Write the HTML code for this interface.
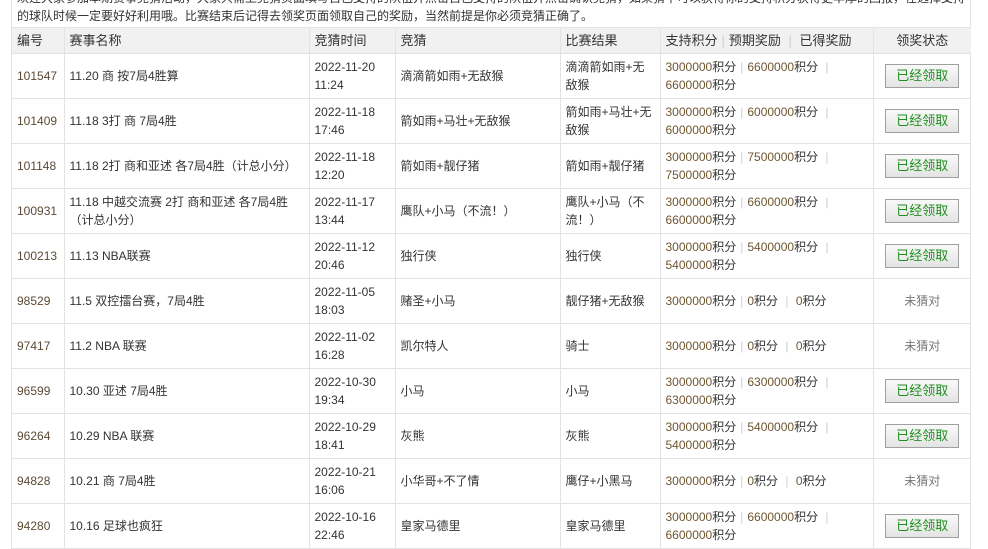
<!DOCTYPE html>
<html><head><meta charset="utf-8"><style>
*{margin:0;padding:0;box-sizing:border-box}
body{width:988px;height:548px;overflow:hidden;background:#fff;font-family:"Liberation Sans","Noto Sans CJK SC",sans-serif;font-size:12px;color:#333}
.wrap{position:absolute;left:11px;top:-12px;width:960px;border-left:1px solid #e3e3e3;border-right:1px solid #e3e3e3}
.intro{padding:1px 5px 0 5px;line-height:18px;height:39px;overflow:hidden;color:#333;font-size:12px}
table{border-collapse:collapse;table-layout:fixed;width:959px}
td,th{border:1px solid #e3e3e3;padding:0 5px;font-weight:normal;text-align:left;line-height:18px;vertical-align:middle}
th{background:#f1f1f1;height:26px;font-size:13px}
td{height:45px}
tr td:first-child,tr th:first-child{border-left:none}
tr td:last-child,tr th:last-child{border-right:none;text-align:center}
.n{color:#5c4a35}
.p{color:#6e5530}
.s{color:#ccc;margin:0 4px}
.b{display:inline-block;width:74px;height:24px;line-height:22px;border:1px solid #a0a0a0;background:linear-gradient(#fafafa,#e4e4e4);color:#1e8e1e;font-size:13px;text-align:center}
.w{color:#777}
</style></head><body><div class="wrap">
<div class="intro">欢迎大家参加本期赛事竞猜活动，大家只需上竞猜页面填写自己支持的队伍并点击自己支持的队伍并点击确认竞猜，如果猜中可以获得你的支持积分获得更丰厚的回报，在选择支持的球队时候一定要好好利用哦。比赛结束后记得去领奖页面领取自己的奖励，当然前提是你必须竞猜正确了。</div>
<table>
<colgroup><col style="width:52px"><col style="width:245px"><col style="width:86px"><col style="width:165px"><col style="width:100px"><col style="width:213px"><col style="width:98px"></colgroup>
<tr><th>编号</th><th>赛事名称</th><th>竞猜时间</th><th>竞猜</th><th>比赛结果</th><th>支持积分<span class="s">|</span>预期奖励 <span class="s">|</span> 已得奖励</th><th>领奖状态</th></tr>
<tr><td class="n">101547</td><td>11.20 商 按7局4胜算</td><td>2022-11-20<br>11:24</td><td>滴滴箭如雨+无敌猴</td><td>滴滴箭如雨+无敌猴</td><td><span class="p">3000000</span>积分<span class="s">|</span><span class="p">6600000</span>积分 <span class="s">|</span><br><span class="p">6600000</span>积分</td><td><span class="b">已经领取</span></td></tr>
<tr><td class="n">101409</td><td>11.18 3打 商 7局4胜</td><td>2022-11-18<br>17:46</td><td>箭如雨+马壮+无敌猴</td><td>箭如雨+马壮+无敌猴</td><td><span class="p">3000000</span>积分<span class="s">|</span><span class="p">6000000</span>积分 <span class="s">|</span><br><span class="p">6000000</span>积分</td><td><span class="b">已经领取</span></td></tr>
<tr><td class="n">101148</td><td>11.18 2打 商和亚述 各7局4胜（计总小分）</td><td>2022-11-18<br>12:20</td><td>箭如雨+靓仔猪</td><td>箭如雨+靓仔猪</td><td><span class="p">3000000</span>积分<span class="s">|</span><span class="p">7500000</span>积分 <span class="s">|</span><br><span class="p">7500000</span>积分</td><td><span class="b">已经领取</span></td></tr>
<tr><td class="n">100931</td><td>11.18 中越交流赛 2打 商和亚述 各7局4胜（计总小分）</td><td>2022-11-17<br>13:44</td><td>鹰队+小马（不流！）</td><td>鹰队+小马（不流！）</td><td><span class="p">3000000</span>积分<span class="s">|</span><span class="p">6600000</span>积分 <span class="s">|</span><br><span class="p">6600000</span>积分</td><td><span class="b">已经领取</span></td></tr>
<tr><td class="n">100213</td><td>11.13 NBA联赛</td><td>2022-11-12<br>20:46</td><td>独行侠</td><td>独行侠</td><td><span class="p">3000000</span>积分<span class="s">|</span><span class="p">5400000</span>积分 <span class="s">|</span><br><span class="p">5400000</span>积分</td><td><span class="b">已经领取</span></td></tr>
<tr><td class="n">98529</td><td>11.5 双控擂台赛，7局4胜</td><td>2022-11-05<br>18:03</td><td>赌圣+小马</td><td>靓仔猪+无敌猴</td><td><span class="p">3000000</span>积分<span class="s">|</span><span class="p">0</span>积分 <span class="s">|</span> <span class="p">0</span>积分</td><td class="w">未猜对</td></tr>
<tr><td class="n">97417</td><td>11.2 NBA 联赛</td><td>2022-11-02<br>16:28</td><td>凯尔特人</td><td>骑士</td><td><span class="p">3000000</span>积分<span class="s">|</span><span class="p">0</span>积分 <span class="s">|</span> <span class="p">0</span>积分</td><td class="w">未猜对</td></tr>
<tr><td class="n">96599</td><td>10.30 亚述 7局4胜</td><td>2022-10-30<br>19:34</td><td>小马</td><td>小马</td><td><span class="p">3000000</span>积分<span class="s">|</span><span class="p">6300000</span>积分 <span class="s">|</span><br><span class="p">6300000</span>积分</td><td><span class="b">已经领取</span></td></tr>
<tr><td class="n">96264</td><td>10.29 NBA 联赛</td><td>2022-10-29<br>18:41</td><td>灰熊</td><td>灰熊</td><td><span class="p">3000000</span>积分<span class="s">|</span><span class="p">5400000</span>积分 <span class="s">|</span><br><span class="p">5400000</span>积分</td><td><span class="b">已经领取</span></td></tr>
<tr><td class="n">94828</td><td>10.21 商 7局4胜</td><td>2022-10-21<br>16:06</td><td>小华哥+不了情</td><td>鹰仔+小黑马</td><td><span class="p">3000000</span>积分<span class="s">|</span><span class="p">0</span>积分 <span class="s">|</span> <span class="p">0</span>积分</td><td class="w">未猜对</td></tr>
<tr><td class="n">94280</td><td>10.16 足球也疯狂</td><td>2022-10-16<br>22:46</td><td>皇家马德里</td><td>皇家马德里</td><td><span class="p">3000000</span>积分<span class="s">|</span><span class="p">6600000</span>积分 <span class="s">|</span><br><span class="p">6600000</span>积分</td><td><span class="b">已经领取</span></td></tr>
</table></div></body></html>
